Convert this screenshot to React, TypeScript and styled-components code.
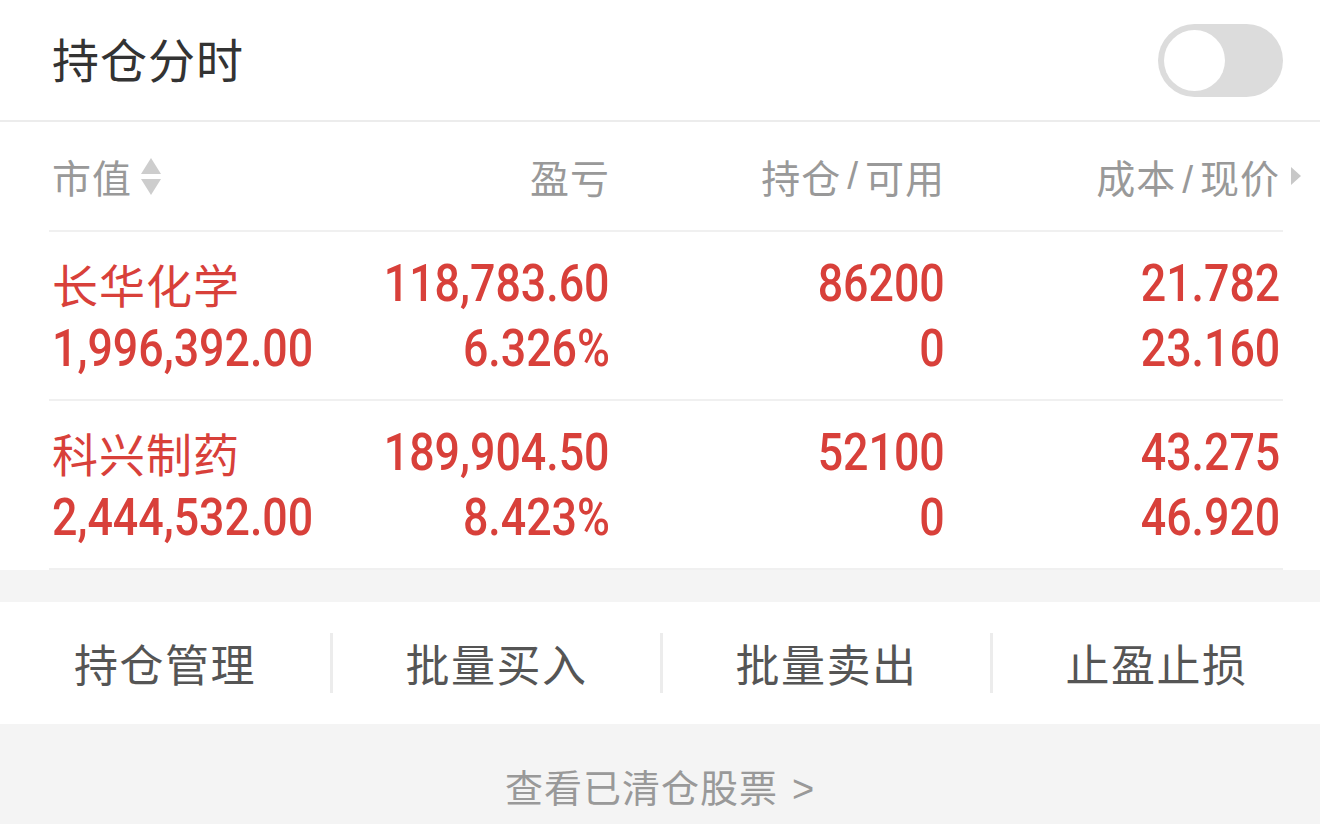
import { FC } from 'react';
import styled, { createGlobalStyle } from 'styled-components';

const GlobalStyle = createGlobalStyle`
    html, body {
        margin: 0;
        padding: 0;
        background: #f4f4f4;
        font-family: 'Noto Sans CJK SC', 'Noto Sans', sans-serif;
    }
`;

const Page = styled.div`
    width: 1320px;
    height: 824px;
    overflow: hidden;
    background: #f4f4f4;
`;

const Panel = styled.div`
    background: #fff;
`;

const TitleBar = styled.div`
    display: flex;
    align-items: center;
    justify-content: space-between;
    height: 122px;
    padding: 0 37px 0 52px;
    border-bottom: 2px solid #ececec;
    box-sizing: border-box;

    h1 {
        margin: 0 0 6px;
        font-size: 47px;
        font-weight: 400;
        color: #333;
        letter-spacing: 1px;
    }
`;

const Toggle = styled.div`
    position: relative;
    width: 125px;
    height: 73px;
    border-radius: 37px;
    background: #dcdcdc;

    &::after {
        content: '';
        position: absolute;
        left: 6px;
        top: 6px;
        width: 61px;
        height: 61px;
        border-radius: 50%;
        background: #fff;
    }
`;

const Table = styled.div`
    margin: 0 37px 0 49px;
`;

const Row = styled.div<{ $height: number }>`
    display: grid;
    grid-template-columns: 262px 299px 335px 335px;
    align-items: center;
    height: ${p => p.$height}px;
    border-bottom: 2px solid #f0f0f0;
    box-sizing: border-box;
`;

const HeadCell = styled.div<{ $left?: boolean }>`
    display: flex;
    align-items: center;
    justify-content: ${p => (p.$left ? 'flex-start' : 'flex-end')};
    padding-left: 3px;
    font-size: 39px;
    color: #999;
    letter-spacing: 1px;
`;

const Slash = styled.span`
    font-family: 'Liberation Sans', sans-serif;
    margin: 0 6px;
`;

const SortIcon = styled.svg`
    margin-left: 8px;
    margin-top: 2px;
`;

const ArrowWrap = styled.span`
    position: relative;
`;

const SideArrow = styled.svg`
    position: absolute;
    right: -22px;
    top: 50%;
    margin-top: -10px;
`;

const DataCell = styled.div<{ $left?: boolean }>`
    display: flex;
    flex-direction: column;
    align-items: ${p => (p.$left ? 'flex-start' : 'flex-end')};
    padding-left: 3px;
    color: #d8403a;
`;

const Name = styled.div`
    height: 65px;
    line-height: 65px;
    font-size: 46px;
    letter-spacing: 1px;
`;

const Num = styled.div<{ $left?: boolean }>`
    height: 65px;
    line-height: 65px;
    font-size: 52px;
    font-weight: 500;
    font-family: 'Roboto', 'Liberation Sans', sans-serif;
    transform: scaleX(0.86);
    transform-origin: ${p => (p.$left ? 'left' : 'right')} center;
`;

const Gap = styled.div`
    height: 32px;
    background: #f4f4f4;
`;

const ActionBar = styled.div`
    display: grid;
    grid-template-columns: repeat(4, 1fr);
    align-items: center;
    height: 122px;
    background: #fff;
`;

const Action = styled.div<{ $divider: boolean }>`
    display: flex;
    align-items: center;
    justify-content: center;
    height: 60px;
    font-size: 44px;
    color: #555;
    letter-spacing: 1.5px;
    border-left: ${p => (p.$divider ? '3px solid #ececec' : 'none')};
`;

const Footer = styled.div`
    display: flex;
    align-items: baseline;
    justify-content: center;
    padding-top: 34px;
    font-size: 38px;
    color: #999;
    letter-spacing: 1px;

    span {
        font-family: 'Liberation Sans', sans-serif;
        margin-left: 14px;
    }
`;

interface IHolding {
    name: string;
    marketValue: string;
    profit: string;
    profitRate: string;
    position: string;
    available: string;
    cost: string;
    price: string;
}

const holdings: IHolding[] = [
    {
        name: '长华化学',
        marketValue: '1,996,392.00',
        profit: '118,783.60',
        profitRate: '6.326%',
        position: '86200',
        available: '0',
        cost: '21.782',
        price: '23.160',
    },
    {
        name: '科兴制药',
        marketValue: '2,444,532.00',
        profit: '189,904.50',
        profitRate: '8.423%',
        position: '52100',
        available: '0',
        cost: '43.275',
        price: '46.920',
    },
];

const actions = ['持仓管理', '批量买入', '批量卖出', '止盈止损'];

const App: FC = () => {
    return (
        <Page>
            <GlobalStyle />
            <Panel>
                <TitleBar>
                    <h1>持仓分时</h1>
                    <Toggle />
                </TitleBar>
                <Table>
                    <Row $height={110}>
                        <HeadCell $left>
                            市值
                            <SortIcon width='22' height='40' viewBox='0 0 22 40'>
                                <polygon points='11,1 21,17 1,17' fill='#cdcdcd' />
                                <polygon points='1,22 21,22 11,38' fill='#cdcdcd' />
                            </SortIcon>
                        </HeadCell>
                        <HeadCell>盈亏</HeadCell>
                        <HeadCell>
                            持仓<Slash>/</Slash>可用
                        </HeadCell>
                        <HeadCell>
                            <ArrowWrap>
                                成本<Slash>/</Slash>现价
                                <SideArrow width='12' height='20' viewBox='0 0 12 20'>
                                    <polygon points='1,1 11,10 1,19' fill='#c8c8c8' />
                                </SideArrow>
                            </ArrowWrap>
                        </HeadCell>
                    </Row>
                    {holdings.map(h => (
                        <Row $height={169} key={h.name}>
                            <DataCell $left>
                                <Name>{h.name}</Name>
                                <Num $left>{h.marketValue}</Num>
                            </DataCell>
                            <DataCell>
                                <Num>{h.profit}</Num>
                                <Num>{h.profitRate}</Num>
                            </DataCell>
                            <DataCell>
                                <Num>{h.position}</Num>
                                <Num>{h.available}</Num>
                            </DataCell>
                            <DataCell>
                                <Num>{h.cost}</Num>
                                <Num>{h.price}</Num>
                            </DataCell>
                        </Row>
                    ))}
                </Table>
            </Panel>
            <Gap />
            <ActionBar>
                {actions.map((a, i) => (
                    <Action key={a} $divider={i > 0}>
                        {a}
                    </Action>
                ))}
            </ActionBar>
            <Footer>
                查看已清仓股票<span>&gt;</span>
            </Footer>
        </Page>
    );
};

export default App;
